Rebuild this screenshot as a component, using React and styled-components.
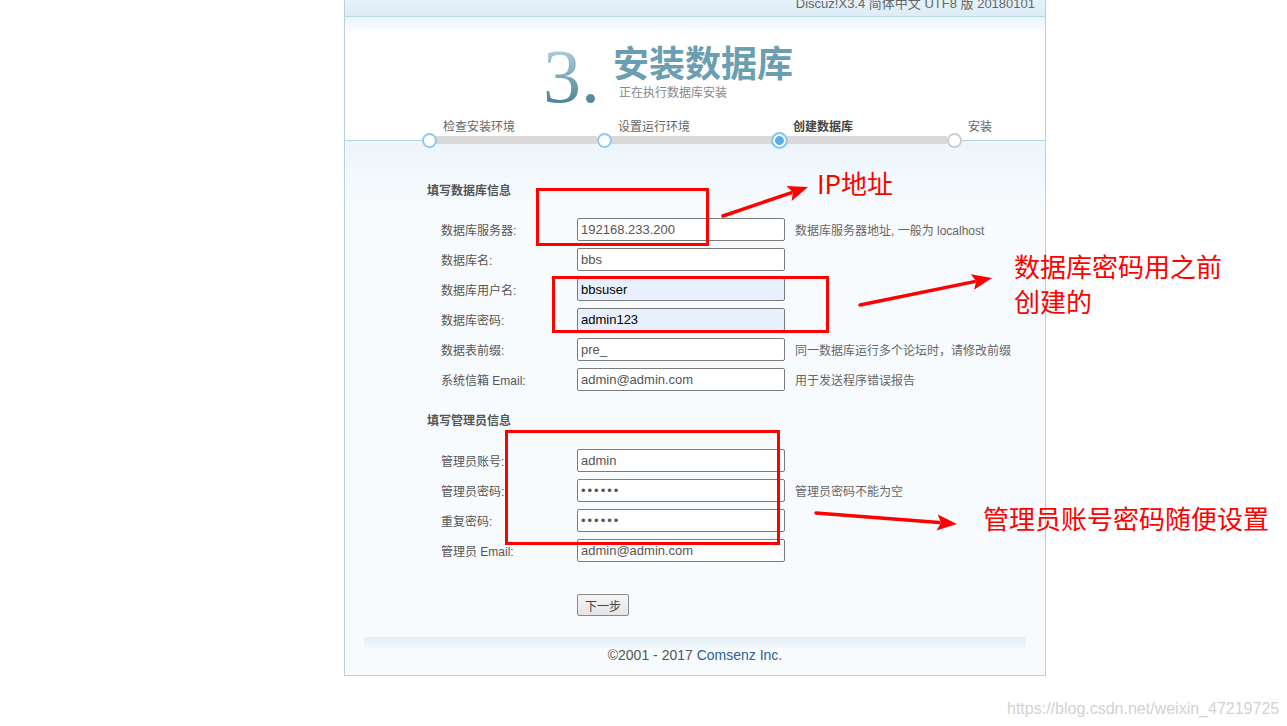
import React from "react"
import styled, { createGlobalStyle } from "styled-components"

const GlobalStyle = createGlobalStyle`
  html, body {
    margin: 0;
    padding: 0;
    background: #fff;
  }
  body {
    font-family: "Liberation Sans", "Noto Sans CJK SC", sans-serif;
  }
`

const Page = styled.div`
    position: relative;
    width: 1287px;
    height: 726px;
    overflow: hidden;
    background: #fff;
`

const Container = styled.div`
    margin: -14px 0 0 344px;
    width: 700px;
    border: 1px solid #b7d1de;
    border-top: none;
    background: #fff;
`

const TopBar = styled.div`
    box-sizing: border-box;
    height: 31px;
    padding: 10px 10px 0 0;
    border-bottom: 1px solid #bcd7e4;
    background: linear-gradient(#eef7fc, #dcecf6);
    text-align: right;
    font-size: 13px;
    line-height: 16px;
    color: #666;
`

const Header = styled.div`
    padding-top: 21px;
    background: linear-gradient(#e9f3f9, #fff 16px);
`

const Banner = styled.div`
    display: flex;
    align-items: flex-start;
    height: 81px;
    padding-left: 198px;
`

const BigNum = styled.div`
    font-family: "Liberation Serif", serif;
    font-size: 76px;
    line-height: 76px;
    background: linear-gradient(#b3d3e0 10%, #4f8598 85%);
    -webkit-background-clip: text;
    background-clip: text;
    color: transparent;
`

const TitleBlock = styled.div`
    margin: 5px 0 0 13px;
`

const Title = styled.div`
    font-family: "Noto Sans CJK SC", sans-serif;
    font-weight: 700;
    font-size: 36px;
    line-height: 36px;
    color: #6b9eb1;
`

const Subtitle = styled.div`
    margin-top: 6px;
    padding-left: 6px;
    font-size: 12px;
    line-height: 16px;
    color: #888;
`

const Track = styled.div`
    display: flex;
    height: 29px;
    padding-left: 77px;
    background: linear-gradient(to bottom, transparent 0, transparent 21px, #b5d3e3 21px, #b5d3e3 22px, #eef6fb 22px);
`

const Step = styled.div`
    width: ${(p) => (p.$last ? "auto" : "175px")};
    flex-grow: ${(p) => (p.$last ? 1 : 0)};
`

const StepLabel = styled.div`
    padding-left: 21px;
    font-size: 12px;
    line-height: 16px;
    height: 16px;
    color: ${(p) => (p.$active ? "#444" : "#666")};
    font-weight: ${(p) => (p.$active ? 700 : 400)};
`

const DotRow = styled.div`
    display: flex;
    align-items: center;
    height: 16px;
    margin-top: -3px;
`

const Dot = styled.span`
    position: relative;
    z-index: 1;
    flex-shrink: 0;
    box-sizing: border-box;
    width: ${(p) => (p.$state === "active" ? 17 : 15)}px;
    height: ${(p) => (p.$state === "active" ? 17 : 15)}px;
    margin-left: ${(p) => (p.$state === "active" ? -1 : 0)}px;
    border-radius: 50%;
    border: 2px solid ${(p) => (p.$state === "todo" ? "#cdcdcd" : "#8ccaf0")};
    background: ${(p) => (p.$state === "active" ? "#5aaee7" : "#fff")};
    box-shadow: ${(p) => (p.$state === "active" ? "inset 0 0 0 2px #fff" : "none")};
`

const Bar = styled.span`
    flex: 1;
    height: 8px;
    margin-left: -2px;
    background: #d9d9d9;
`

const Body = styled.div`
    padding: 28px 0 0 82px;
    background: linear-gradient(#eef6fb, #f7fbfe 60px);
`

const SectionTitle = styled.div`
    margin-top: ${(p) => p.$top || 0}px;
    font-size: 12px;
    font-weight: 700;
    line-height: 30px;
    color: #555;
`

const Rows = styled.div`
    margin-top: ${(p) => p.$top}px;
`

const Row = styled.div`
    display: flex;
    align-items: center;
    height: 30px;
    padding-left: 14px;
`

const Label = styled.label`
    width: 136px;
    flex-shrink: 0;
    font-size: 12px;
    color: #555;
`

const Input = styled.input`
    box-sizing: border-box;
    width: 208px;
    height: 23px;
    margin: 0;
    padding: 0 3px;
    border: 1px solid #7b7b7b;
    border-radius: 2px;
    font-family: "Liberation Sans", sans-serif;
    font-size: 13px;
    letter-spacing: ${(p) => (p.type === "password" ? "2px" : "normal")};
    color: ${(p) => (p.$filled ? "#000" : "#555")};
    background: ${(p) => (p.$filled ? "#e8f0fe" : "#fff")};
    outline: none;
`

const Hint = styled.span`
    margin-left: 10px;
    font-size: 12px;
    color: #666;
    white-space: nowrap;
`

const ButtonRow = styled.div`
    margin-top: 29px;
    padding-left: 150px;
`

const NextButton = styled.button`
    box-sizing: border-box;
    width: 52px;
    height: 22px;
    padding: 0;
    border: 1px solid #8a8a8a;
    border-radius: 2px;
    background: linear-gradient(#f6f6f6, #e4e4e4);
    font-family: "Noto Sans CJK SC", sans-serif;
    font-size: 12px;
    color: #444;
`

const FooterBand = styled.div`
    margin: 21px 19px 0 -63px;
    height: 11px;
    background: linear-gradient(#e3eff8, #f2f7fb);
`

const Copyright = styled.div`
    margin-left: -82px;
    padding-bottom: 13px;
    text-align: center;
    font-size: 14px;
    line-height: 14px;
    color: #555;
    span {
        color: #2b5f97;
    }
`

const Overlay = styled.div`
    position: absolute;
    inset: 0;
    pointer-events: none;
`

const RedBox = styled.div`
    position: absolute;
    box-sizing: border-box;
    left: ${(p) => p.$x}px;
    top: ${(p) => p.$y}px;
    width: ${(p) => p.$w}px;
    height: ${(p) => p.$h}px;
    border: 3px solid #f00;
`

const Note = styled.div`
    position: absolute;
    left: ${(p) => p.$x}px;
    top: ${(p) => p.$y}px;
    font-family: "Noto Sans CJK SC", sans-serif;
    font-size: 26px;
    line-height: 35px;
    color: #f00;
    white-space: nowrap;
`

const Watermark = styled.div`
    position: absolute;
    left: 1007px;
    top: 700px;
    font-family: "Liberation Sans", sans-serif;
    font-size: 16px;
    line-height: 18px;
    color: #d2d2d2;
`

const ArrowLayer = styled.svg`
    position: absolute;
    left: 0;
    top: 0;
`

const Arrow = ({ from, to }) => {
    const [x1, y1] = from
    const [x2, y2] = to
    const a = Math.atan2(y2 - y1, x2 - x1)
    const len = 20
    const half = 8
    const bx = x2 - len * Math.cos(a)
    const by = y2 - len * Math.sin(a)
    const px = -Math.sin(a) * half
    const py = Math.cos(a) * half
    return (
        <g>
            <line x1={x1} y1={y1} x2={bx + 2 * Math.cos(a)} y2={by + 2 * Math.sin(a)}
                stroke="#f00" strokeWidth="3.5" strokeLinecap="round" />
            <polygon fill="#f00"
                points={`${x2},${y2} ${bx + px},${by + py} ${bx + 4 * Math.cos(a)},${by + 4 * Math.sin(a)} ${bx - px},${by - py}`} />
        </g>
    )
}

const steps = [
    { label: "检查安装环境", state: "done" },
    { label: "设置运行环境", state: "done" },
    { label: "创建数据库", state: "active" },
    { label: "安装", state: "todo" },
]

const dbRows = [
    { label: "数据库服务器:", value: "192168.233.200", hint: "数据库服务器地址, 一般为 localhost" },
    { label: "数据库名:", value: "bbs" },
    { label: "数据库用户名:", value: "bbsuser", filled: true },
    { label: "数据库密码:", value: "admin123", filled: true },
    { label: "数据表前缀:", value: "pre_", hint: "同一数据库运行多个论坛时，请修改前缀" },
    { label: "系统信箱 Email:", value: "admin@admin.com", hint: "用于发送程序错误报告" },
]

const adminRows = [
    { label: "管理员账号:", value: "admin" },
    { label: "管理员密码:", value: "123456", type: "password", hint: "管理员密码不能为空" },
    { label: "重复密码:", value: "123456", type: "password" },
    { label: "管理员 Email:", value: "admin@admin.com" },
]

const FormRow = ({ row }) => (
    <Row>
        <Label>{row.label}</Label>
        <Input type={row.type || "text"} value={row.value} $filled={row.filled} readOnly />
        {row.hint && <Hint>{row.hint}</Hint>}
    </Row>
)

const App = () => {
    return (
        <Page>
            <GlobalStyle />
            <Container>
                <TopBar>Discuz!X3.4 简体中文 UTF8 版 20180101</TopBar>
                <Header>
                    <Banner>
                        <BigNum>3.</BigNum>
                        <TitleBlock>
                            <Title>安装数据库</Title>
                            <Subtitle>正在执行数据库安装</Subtitle>
                        </TitleBlock>
                    </Banner>
                    <Track>
                        {steps.map((s, i) => (
                            <Step key={s.label} $last={i === steps.length - 1}>
                                <StepLabel $active={s.state === "active"}>{s.label}</StepLabel>
                                <DotRow>
                                    <Dot $state={s.state} />
                                    {i < steps.length - 1 && <Bar />}
                                </DotRow>
                            </Step>
                        ))}
                    </Track>
                </Header>
                <Body>
                    <SectionTitle>填写数据库信息</SectionTitle>
                    <Rows $top={8}>
                        {dbRows.map((r) => <FormRow key={r.label} row={r} />)}
                    </Rows>
                    <SectionTitle $top={12}>填写管理员信息</SectionTitle>
                    <Rows $top={9}>
                        {adminRows.map((r) => <FormRow key={r.label} row={r} />)}
                    </Rows>
                    <ButtonRow>
                        <NextButton>下一步</NextButton>
                    </ButtonRow>
                    <FooterBand />
                    <Copyright>©2001 - 2017 <span>Comsenz Inc.</span></Copyright>
                </Body>
            </Container>

            <Overlay>
                <RedBox $x={536} $y={188} $w={173} $h={58} />
                <RedBox $x={552} $y={276} $w={277} $h={57} />
                <RedBox $x={505} $y={430} $w={275} $h={115} />
                <ArrowLayer width="1287" height="726">
                    <Arrow from={[723, 216]} to={[808, 187]} />
                    <Arrow from={[860, 305]} to={[992, 278]} />
                    <Arrow from={[816, 513]} to={[957, 524]} />
                </ArrowLayer>
                <Note $x={817} $y={165}>IP地址</Note>
                <Note $x={1014} $y={248}>数据库密码用之前<br />创建的</Note>
                <Note $x={983} $y={500}>管理员账号密码随便设置</Note>
                <Watermark>https://blog.csdn.net/weixin_47219725</Watermark>
            </Overlay>
        </Page>
    )
}

export default App
